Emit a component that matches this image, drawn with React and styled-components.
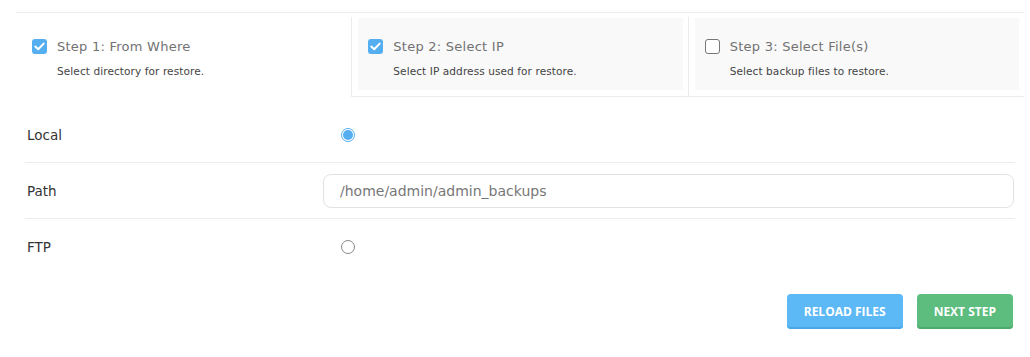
import styled, { createGlobalStyle } from "styled-components";

const GlobalStyle = createGlobalStyle`
  body {
    margin: 0;
    background: #fff;
    font-family: "DejaVu Sans", "Noto Sans", sans-serif;
  }
`;

const steps = [
  { id: 1, title: "Step 1: From Where", text: "Select directory for restore.", done: true, active: true },
  { id: 2, title: "Step 2: Select IP", text: "Select IP address used for restore.", done: true },
  { id: 3, title: "Step 3: Select File(s)", text: "Select backup files to restore.", done: false },
];

const Check = ({ checked }) => (
  <CheckBox checked={checked}>
    {checked && (
      <svg width="11" height="9" viewBox="0 0 11 9">
        <path d="M1.3 4.6 L4.2 7.3 L9.7 1.6" fill="none" stroke="#fff" strokeWidth="2" strokeLinecap="round" strokeLinejoin="round" />
      </svg>
    )}
  </CheckBox>
);

const App = () => {
  return (
    <>
      <GlobalStyle />
      <Wrapper>
        <Tabs>
          {steps.map(s => (
            <Tab key={s.id} active={s.active}>
              <TabInner active={s.active}>
                <TabTitle>
                  <Check checked={s.done} />
                  <span>{s.title}</span>
                </TabTitle>
                <TabText>{s.text}</TabText>
              </TabInner>
            </Tab>
          ))}
        </Tabs>

        <Form>
          <Row>
            <Label>Local</Label>
            <Radio checked />
          </Row>
          <Row>
            <Label>Path</Label>
            <PathInput defaultValue="/home/admin/admin_backups" />
          </Row>
          <Row last>
            <Label>FTP</Label>
            <Radio />
          </Row>
        </Form>

        <Actions>
          <Button color="#5db9f6" shade="#4aa8e8">RELOAD FILES</Button>
          <Button color="#5dbd7e" shade="#4cac6d">NEXT STEP</Button>
        </Actions>
      </Wrapper>
    </>
  );
};

export default App;

/* ---------------------------- STYLED COMPONENTS --------------------------- */

const Wrapper = styled.div`
  padding: 12px 6px 0 16px;
`;

const Tabs = styled.div`
  display: flex;
  border-top: 1px solid #ececec;
  width: 1008px;
`;

const Tab = styled.div`
  flex: 1;
  padding: 1px 5px 6px 6px;
  margin-top: 4px;
  border-left: ${p => (p.active ? "none" : "1px solid #ececec")};
  border-bottom: ${p => (p.active ? "1px solid transparent" : "1px solid #ececec")};
  &:first-child {
    margin-top: 0;
    padding-top: 5px;
  }
`;

const TabInner = styled.div`
  height: 72px;
  box-sizing: border-box;
  background: ${p => (p.active ? "#fff" : "#f9f9f9")};
  padding: 21px 0 0 10px;
`;

const TabTitle = styled.div`
  display: flex;
  align-items: center;
  gap: 10px;
  font-size: 13px;
  color: #727272;
  letter-spacing: 0.25px;
`;

const CheckBox = styled.span`
  width: 15px;
  height: 15px;
  box-sizing: border-box;
  border-radius: 3px;
  display: inline-flex;
  align-items: center;
  justify-content: center;
  background: ${p => (p.checked ? "#55aef0" : "#fff")};
  border: ${p => (p.checked ? "none" : "1.5px solid #777")};
`;

const TabText = styled.div`
  margin: 11px 0 0 25px;
  font-size: 10.5px;
  color: #444;
  letter-spacing: 0.1px;
`;

const Form = styled.div`
  margin: 10px 9px 0 9px;
`;

const Row = styled.div`
  display: flex;
  align-items: center;
  height: 55px;
  border-bottom: ${p => (p.last ? "none" : "1px solid #ececec")};
`;

const Label = styled.div`
  width: 296px;
  padding-left: 2px;
  font-size: 13.5px;
  color: #333;
`;

const Radio = styled.span`
  margin-left: 18px;
  width: 14px;
  height: 14px;
  box-sizing: border-box;
  border-radius: 50%;
  border: 1px solid ${p => (p.checked ? "#55aef0" : "#888")};
  display: flex;
  align-items: center;
  justify-content: center;
  &::after {
    content: "";
    display: ${p => (p.checked ? "block" : "none")};
    width: 10px;
    height: 10px;
    border-radius: 50%;
    background: #55aef0;
  }
`;

const PathInput = styled.input`
  flex: 1;
  margin-right: 1px;
  height: 34px;
  box-sizing: border-box;
  border: 1px solid #e2e2e2;
  border-radius: 8px;
  padding: 0 16px;
  font-family: inherit;
  font-size: 14px;
  color: #777;
  outline: none;
`;

const Actions = styled.div`
  display: flex;
  justify-content: flex-end;
  gap: 14px;
  width: 997px;
  margin-top: 20px;
`;

const Button = styled.button`
  height: 35px;
  padding: 0 17px;
  border: none;
  border-radius: 4px;
  background: ${p => p.color};
  box-shadow: inset 0 -2px 0 ${p => p.shade};
  color: #fff;
  font-family: "Open Sans", sans-serif;
  font-weight: 700;
  font-size: 12px;
`;
